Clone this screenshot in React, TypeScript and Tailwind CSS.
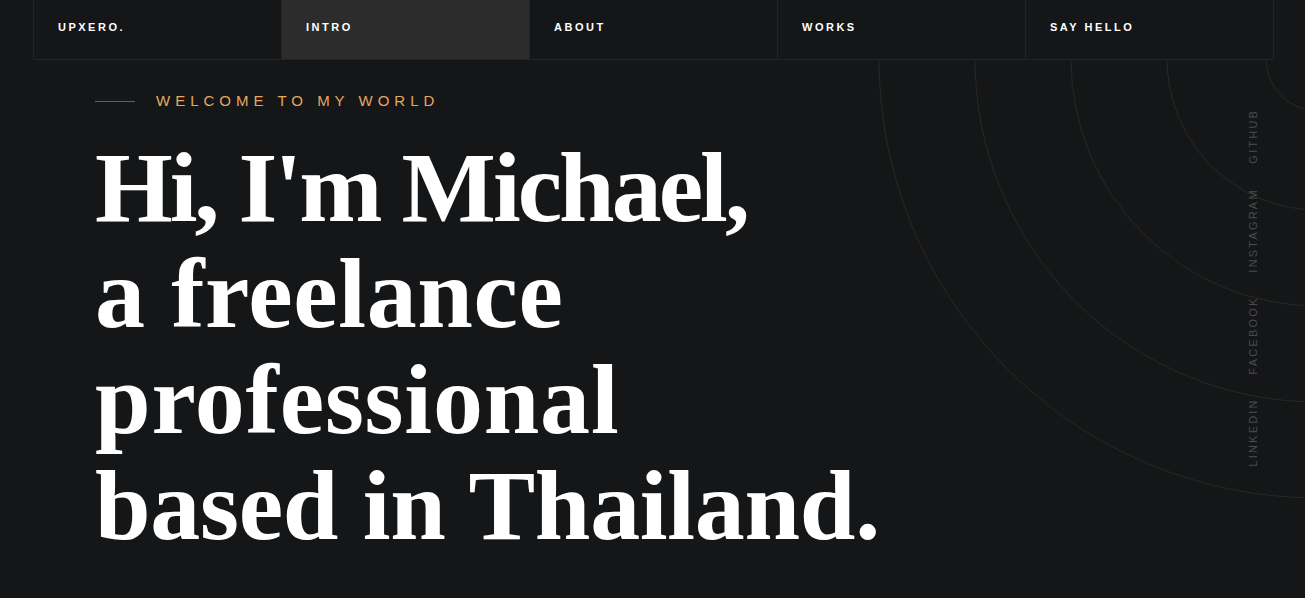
const navItems = ["UPXERO.", "INTRO", "ABOUT", "WORKS", "SAY HELLO"];
const socials = ["LINKEDIN", "FACEBOOK", "INSTAGRAM", "GITHUB"];
const radii = [52, 151, 247, 343, 439];

export default function App() {
  return (
    <div className="relative min-h-[598px] w-full overflow-hidden bg-[#151618] font-['Liberation_Sans',sans-serif]">
      {/* decorative rings */}
      <svg
        className="pointer-events-none absolute left-0 top-[59px]"
        width="1305"
        height="539"
        viewBox="0 0 1305 539"
      >
        {radii.map((r) => (
          <circle key={r} cx="1318" cy="0" r={r} fill="none" stroke="#2a2823" strokeWidth="1" />
        ))}
      </svg>

      <nav className="relative ml-[33px] mr-[31px] flex h-[60px] border-x border-b border-[#232426]">
        {navItems.map((item, i) => (
          <a
            key={item}
            href="#"
            className={`flex flex-1 items-center border-r border-[#232426] pb-[5px] pl-[24px] text-[11px] font-bold tracking-[2.5px] text-white last:border-r-0 ${
              i === 1 ? "bg-[#2c2c2c]" : ""
            }`}
          >
            {item}
          </a>
        ))}
      </nav>

      <main className="relative pl-[95px]">
        <div className="mt-[31px] flex items-center gap-[21px]">
          <span className="h-px w-[40px] bg-[#5f6063]" />
          <span className="text-[15px] leading-[20px] tracking-[5px] text-[#e5a85c]">
            WELCOME TO MY WORLD
          </span>
        </div>
        <h1 className="mt-[24px] font-['Liberation_Serif',serif] text-[100px] font-bold leading-[106px] text-white">
          <span className="block tracking-[-3px]">Hi, I'm Michael,</span>
          <span className="block tracking-[0.6px]">a freelance</span>
          <span className="block tracking-[0.8px]">professional</span>
          <span className="block tracking-[-0.3px]">based in Thailand.</span>
        </h1>
      </main>

      <ul className="absolute right-[45px] top-[109px] flex rotate-180 gap-[24px] text-[11px] leading-[14px] tracking-[2.2px] text-[#4b4c4f] [writing-mode:vertical-rl]">
        {socials.map((s) => (
          <li key={s}>
            <a href="#">{s}</a>
          </li>
        ))}
      </ul>
    </div>
  );
}
